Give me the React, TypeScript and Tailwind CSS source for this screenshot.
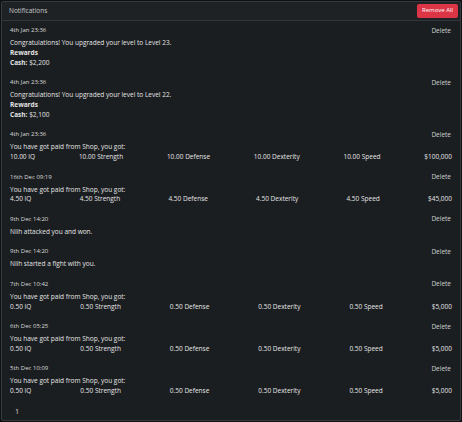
import React from "react";

type Stat = { iq: string; str: string; def: string; dex: string; spd: string; cash: string };

type Note = {
  time: string;
  text: string;
  reward?: string;
  stats?: Stat;
};

const paid = (v: string, cash: string): Stat => ({
  iq: `${v} IQ`,
  str: `${v} Strength`,
  def: `${v} Defense`,
  dex: `${v} Dexterity`,
  spd: `${v} Speed`,
  cash,
});

const NOTES: Note[] = [
  { time: "4th Jan 23:36", text: "Congratulations! You upgraded your level to Level 23.", reward: "$2,200" },
  { time: "4th Jan 23:36", text: "Congratulations! You upgraded your level to Level 22.", reward: "$2,100" },
  { time: "4th Jan 23:36", text: "You have got paid from Shop, you got:", stats: paid("10.00", "$100,000") },
  { time: "16th Dec 09:19", text: "You have got paid from Shop, you got:", stats: paid("4.50", "$45,000") },
  { time: "9th Dec 14:20", text: "Niih attacked you and won." },
  { time: "9th Dec 14:20", text: "Niih started a fight with you." },
  { time: "7th Dec 10:42", text: "You have got paid from Shop, you got:", stats: paid("0.50", "$5,000") },
  { time: "6th Dec 05:25", text: "You have got paid from Shop, you got:", stats: paid("0.50", "$5,000") },
  { time: "5th Dec 10:09", text: "You have got paid from Shop, you got:", stats: paid("0.50", "$5,000") },
];

function Row({ n }: { n: Note }) {
  return (
    <div className="px-[8px] pt-[6px] pb-[5.25px]">
      <div className="flex h-[8px] items-center justify-between">
        <span className="text-[6px] text-[#dcdcdc]">{n.time}</span>
        <button className="mr-[1px] text-[6.5px] text-[#cfcfcf]">Delete</button>
      </div>
      <div className="mt-[3.5px] text-[6.5px] leading-[9.75px] text-[#e4e4e4]">
        <div>{n.text}</div>
        {n.reward && (
          <>
            <div className="font-bold">Rewards</div>
            <div>
              <span className="font-bold">Cash:</span> {n.reward}
            </div>
          </>
        )}
        {n.stats && (
          <div className="flex justify-between">
            <span>{n.stats.iq}</span>
            <span>{n.stats.str}</span>
            <span>{n.stats.def}</span>
            <span>{n.stats.dex}</span>
            <span>{n.stats.spd}</span>
            <span>{n.stats.cash}</span>
          </div>
        )}
      </div>
    </div>
  );
}

export default function App() {
  return (
    <div
      className="h-[422px] w-[462px] bg-[#0e1012] p-px"
      style={{ fontFamily: '"Open Sans", "Noto Sans", sans-serif' }}
    >
      <div className="flex h-full flex-col rounded-[2px] border border-[#36393d] bg-[#1b1e21]">
        <div className="flex h-[20px] items-center justify-between border-b border-[#33363a] bg-[#1f2225] pl-[7px] pr-[2px]">
          <span className="text-[6.5px] text-[#c8c8c8]">Notifications</span>
          <button className="h-[14px] rounded-[2px] bg-[#dc3545] px-[5px] text-[6px] text-white">Remove All</button>
        </div>
        <div>
          {NOTES.map((n, i) => (
            <Row key={i} n={n} />
          ))}
        </div>
        <div className="flex px-[9px] pt-[3px]">
          <span className="flex h-[16px] w-[12px] items-center justify-center text-[6.5px] text-[#e0e0e0]">1</span>
        </div>
      </div>
    </div>
  );
}
